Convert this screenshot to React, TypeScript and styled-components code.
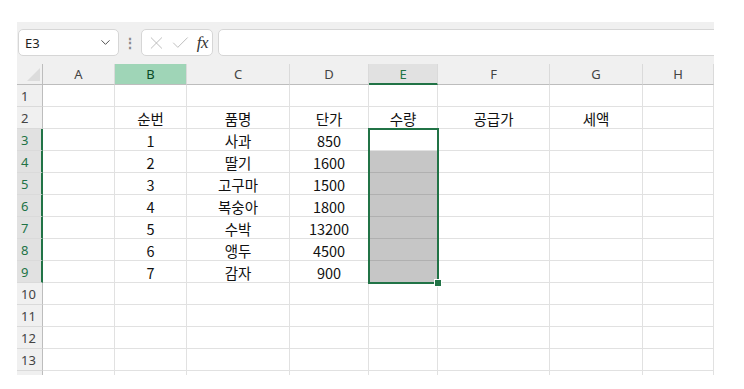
import { FC } from 'react';
import styled, { createGlobalStyle, css } from 'styled-components';
import { ChevronDown, X, Check } from 'lucide-react';

const GlobalStyle = createGlobalStyle`
  body {
    margin: 0;
    background: #fff;
    font-family: 'Noto Sans', 'Noto Sans CJK KR', sans-serif;
  }
`;

const COLS = [26, 72, 72, 103, 79, 69, 112, 93, 71];
const LETTERS = ['A', 'B', 'C', 'D', 'E', 'F', 'G', 'H'];
const HEAD_H = 21;
const ROW_H = 22;

const Sheet = styled.div`
  position: relative;
  margin: 22px 0 0 17px;
  width: 697px;
  height: 353px;
  overflow: hidden;
  background: #fff;
`;

const Toolbar = styled.div`
  height: 42px;
  box-sizing: border-box;
  background: #f0f0f0;
  display: flex;
  align-items: flex-start;
  padding: 7px 0 0 1px;
`;

const Box = styled.div`
  height: 27px;
  box-sizing: border-box;
  background: #fff;
  border: 1px solid #d6d6d6;
  border-radius: 5px;
  display: flex;
  align-items: center;
`;

const NameBox = styled(Box)`
  width: 101px;
  justify-content: space-between;
  padding: 0 5px 0 6px;
  font-size: 13px;
  color: #222;
`;

const Dots = styled.div`
  width: 22px;
  height: 27px;
  display: flex;
  align-items: center;
  justify-content: center;
  color: #8a8a8a;
  font-size: 14px;
  font-weight: bold;
`;

const FxBox = styled(Box)`
  width: 72px;
  padding: 0 4px;
  gap: 3px;
  color: #b4b4b4;
`;

const Fx = styled.span`
  margin-left: 3px;
  font-family: 'Liberation Serif', serif;
  font-style: italic;
  font-size: 17px;
  color: #333;
  letter-spacing: -0.5px;
`;

const FormulaInput = styled(Box)`
  flex: 1;
  margin-left: 5px;
  margin-right: -8px;
`;

const Grid = styled.div`
  position: relative;
  display: grid;
  grid-template-columns: ${COLS.map((c) => c + 'px').join(' ')};
  grid-template-rows: ${HEAD_H}px;
  grid-auto-rows: ${ROW_H}px;
`;

const Corner = styled.div`
  position: relative;
  background: #f0f0f0;
  border-right: 1px solid #bdbdbd;
  border-bottom: 1px solid #bdbdbd;
  box-sizing: border-box;
  &::after {
    content: '';
    position: absolute;
    right: 2px;
    bottom: 3px;
    border-style: solid;
    border-width: 0 0 13px 13px;
    border-color: transparent transparent #dcdcdc transparent;
  }
`;

const ColHead = styled.div<{ $state?: 'sel' | 'active' }>`
  box-sizing: border-box;
  background: #f0f0f0;
  border-right: 1px solid #dadada;
  border-bottom: 1px solid #bdbdbd;
  display: flex;
  align-items: center;
  justify-content: center;
  font-size: 13px;
  color: #444;
  ${(p) =>
    p.$state === 'sel' &&
    css`
      background: #9fd5b7;
      color: #0b4a26;
    `}
  ${(p) =>
    p.$state === 'active' &&
    css`
      background: #e1e1e1;
      color: #217346;
      border-bottom: 2px solid #217346;
    `}
`;

const RowHead = styled.div<{ $active?: boolean }>`
  box-sizing: border-box;
  background: ${(p) => (p.$active ? '#e1e1e1' : '#f0f0f0')};
  border-right: ${(p) => (p.$active ? '2px solid #217346' : '1px solid #bdbdbd')};
  border-bottom: 1px solid #dadada;
  display: flex;
  align-items: center;
  padding-left: 4px;
  font-size: 13px;
  color: ${(p) => (p.$active ? '#217346' : '#444')};
`;

const Cell = styled.div<{ $fill?: boolean }>`
  box-sizing: border-box;
  background: ${(p) => (p.$fill ? '#c6c6c6' : '#fff')};
  border-right: 1px solid #e1e1e1;
  border-bottom: 1px solid ${(p) => (p.$fill ? '#b0b0b0' : '#e1e1e1')};
  display: flex;
  align-items: center;
  justify-content: center;
  font-family: 'Noto Sans CJK KR', 'Noto Sans', sans-serif;
  font-size: 14.5px;
  color: #111;
  padding-top: 1px;
`;

const Selection = styled.div`
  position: absolute;
  box-sizing: border-box;
  border: 2px solid #217346;
  pointer-events: none;
`;

const Handle = styled.div`
  position: absolute;
  right: -5px;
  bottom: -5px;
  width: 6px;
  height: 6px;
  background: #217346;
  border: 1px solid #fff;
`;

const data: (string | number)[][] = [
  [],
  ['', '순번', '품명', '단가', '수량', '공급가', '세액', ''],
  ['', 1, '사과', 850],
  ['', 2, '딸기', 1600],
  ['', 3, '고구마', 1500],
  ['', 4, '복숭아', 1800],
  ['', 5, '수박', 13200],
  ['', 6, '앵두', 4500],
  ['', 7, '감자', 900],
  [],
  [],
  [],
  [],
];

const App: FC = () => {
  const selCol = 4; // E
  const selStart = 3;
  const selEnd = 9;
  const left = COLS.slice(0, selCol + 1).reduce((a, b) => a + b, 0) - 1;
  const top = HEAD_H + (selStart - 1) * ROW_H - 1;
  const width = COLS[selCol + 1] + 2;
  const height = (selEnd - selStart + 1) * ROW_H + 2;

  return (
    <>
      <GlobalStyle />
      <Sheet>
        <Toolbar>
          <NameBox>
            <span>E3</span>
            <ChevronDown size={15} color="#444" strokeWidth={1.5} />
          </NameBox>
          <Dots>⋮</Dots>
          <FxBox>
            <X size={22} strokeWidth={1} />
            <Check size={22} strokeWidth={1} />
            <Fx>fx</Fx>
          </FxBox>
          <FormulaInput />
        </Toolbar>
        <Grid>
          <Corner />
          {LETTERS.map((l, i) => (
            <ColHead key={l} $state={i === 1 ? 'sel' : i === selCol ? 'active' : undefined}>
              {l}
            </ColHead>
          ))}
          {data.map((row, r) => {
            const rowNo = r + 1;
            const active = rowNo >= selStart && rowNo <= selEnd;
            return [
              <RowHead key={'h' + r} $active={active}>
                {rowNo}
              </RowHead>,
              ...LETTERS.map((l, c) => (
                <Cell key={l + r} $fill={c === selCol && rowNo > selStart && rowNo <= selEnd}>
                  {row[c] ?? ''}
                </Cell>
              )),
            ];
          })}
          {/* partial 14th row, cut by the sheet edge */}
          <RowHead />
          {LETTERS.map((l) => (
            <Cell key={l + 'x'} />
          ))}
          <Selection style={{ left, top, width, height }}>
            <Handle />
          </Selection>
        </Grid>
      </Sheet>
    </>
  );
};

export default App;
